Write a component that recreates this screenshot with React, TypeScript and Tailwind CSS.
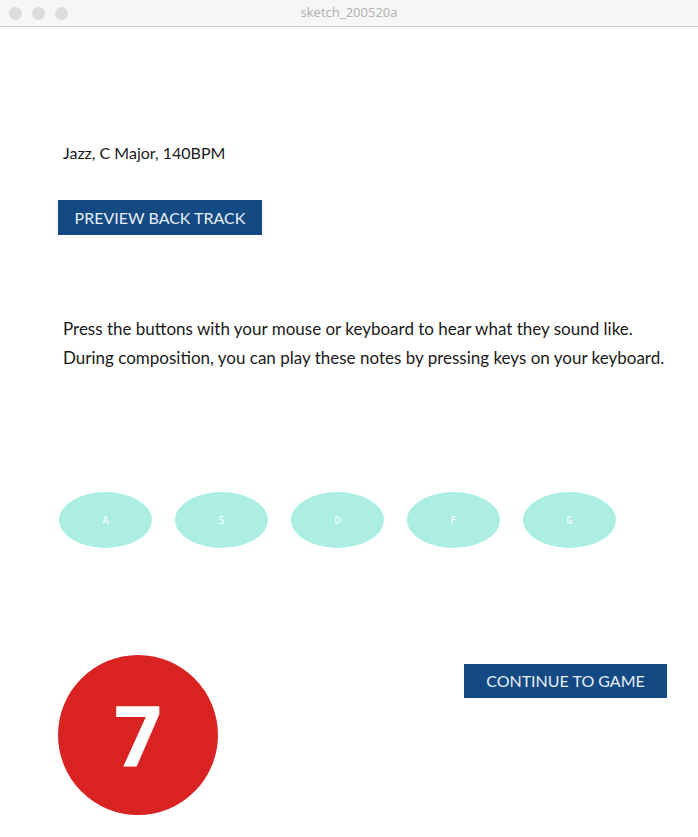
import React from "react";

const keys = ["A", "S", "D", "F", "G"];

export default function App() {
  return (
    <div className="w-[698px] h-[837px] bg-white overflow-hidden" style={{ fontFamily: "Lato, 'Open Sans', sans-serif" }}>
      <div className="relative h-[27px] bg-[#f6f6f6] border-b border-[#c9c9c9] flex items-center">
        <div className="flex gap-[10px] pl-[9px]">
          <span className="w-[13px] h-[13px] rounded-full bg-[#dcdcdc]" />
          <span className="w-[13px] h-[13px] rounded-full bg-[#dcdcdc]" />
          <span className="w-[13px] h-[13px] rounded-full bg-[#dcdcdc]" />
        </div>
        <div className="absolute inset-0 flex items-center justify-center text-[13px] text-[#b3b3b3]" style={{ fontFamily: "'Noto Sans', sans-serif" }}>
          sketch_200520a
        </div>
      </div>
      <div className="pl-[58px] pr-[31px]">
        <div className="mt-[114px] pl-[5px] text-[16px] leading-[24px] text-[#1a1a1a]">Jazz, C Major, 140BPM</div>
        <div className="mt-[35px] w-[204px] h-[35px] bg-[#134a84] flex items-center justify-center text-[16px] text-[#e9eef5]">
          PREVIEW BACK TRACK
        </div>
        <div className="mt-[79px] pl-[5px] text-[17px] leading-[29px] text-[#1a1a1a]">
          <div>Press the buttons with your mouse or keyboard to hear what they sound like.</div>
          <div>During composition, you can play these notes by pressing keys on your keyboard.</div>
        </div>
        <div className="mt-[120px] flex gap-[23px] pl-[1px]">
          {keys.map((k) => (
            <div key={k} className="w-[93px] h-[56px] rounded-[50%] bg-[#adeee3] flex items-center justify-center text-[10px] text-white" style={{ fontFamily: "'DejaVu Sans Mono', monospace" }}>
              {k}
            </div>
          ))}
        </div>
        <div className="mt-[107px] flex justify-between items-start">
          <div className="w-[160px] h-[160px] rounded-full bg-[#d92323] flex items-center justify-center text-white text-[84px] font-bold leading-none" style={{ fontFamily: "'Open Sans', sans-serif" }}>
            7
          </div>
          <div className="mt-[9px] w-[203px] h-[34px] bg-[#134a84] flex items-center justify-center text-[16px] text-[#e9eef5]">
            CONTINUE TO GAME
          </div>
        </div>
      </div>
    </div>
  );
}
